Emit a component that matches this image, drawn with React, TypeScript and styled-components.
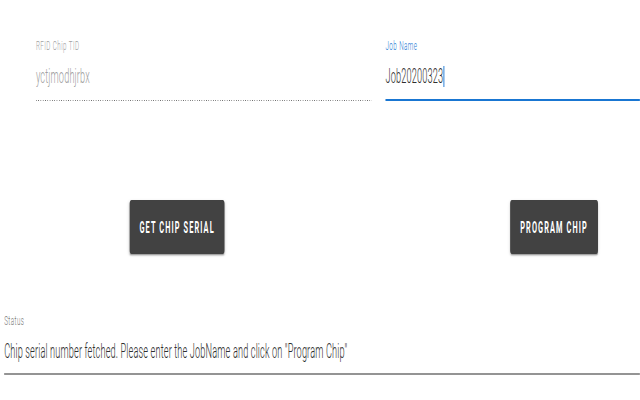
import React from "react";
import styled, { createGlobalStyle } from "styled-components";

const SX = 0.46;
const W = Math.round(640 / SX);

const Global = createGlobalStyle`
  html, body { margin: 0; padding: 0; background: #ffffff; overflow: hidden; }
  body { font-family: Roboto, "Liberation Sans", Arial, sans-serif; }
`;

const Page = styled.div`
  width: ${W}px;
  height: 400px;
  transform: scaleX(${SX});
  transform-origin: 0 0;
  display: flex;
  flex-direction: column;
  font-family: Roboto, "Liberation Sans", Arial, sans-serif;
`;

const FieldsRow = styled.div`
  display: flex;
  gap: 30px;
  padding: 39px 0 0 78px;
`;

const Field = styled.div<{ $w?: number }>`
  display: flex;
  flex-direction: column;
  ${(p) => (p.$w ? `width: ${p.$w}px;` : "flex: 1;")}
`;

const Label = styled.div<{ $color: string }>`
  font-size: 13.5px;
  line-height: 12px;
  letter-spacing: 1px;
  font-weight: 300;
  color: ${(p) => p.$color};
  height: 12px;
`;

const Value = styled.div<{ $color: string; $line: "dotted" | "focus" | "plain" }>`
  margin-top: 13px;
  font-size: 20px;
  line-height: 24px;
  height: 24px;
  font-weight: 300;
  letter-spacing: 0.3px;
  color: ${(p) => p.$color};
  display: flex;
  align-items: center;
  padding-bottom: ${(p) => (p.$line === "focus" ? 11 : 10)}px;
  ${(p) =>
    p.$line === "focus"
      ? "border-bottom: 2px solid #1976d2;"
      : p.$line === "dotted"
      ? `
    background-image: linear-gradient(to right, rgba(0,0,0,0.6) 50%, transparent 50%);
    background-size: 5px 1px;
    background-repeat: repeat-x;
    background-position: left bottom;
    padding-bottom: 13px;
  `
      : "border-bottom: 2px solid rgba(0,0,0,0.42);"}
`;

const Caret = styled.span`
  display: inline-block;
  width: 2px;
  height: 21px;
  margin-left: 1px;
  background: #1976d2;
`;

const ButtonsRow = styled.div`
  display: flex;
  padding: 0 0 0 282px;
  margin-top: 99px;
  gap: 621px;
`;

const Button = styled.button<{ $w: number }>`
  width: ${(p) => p.$w}px;
  height: 54px;
  border: none;
  border-radius: 4px;
  background: #424242;
  color: #ffffff;
  font-family: Roboto, "Liberation Sans", Arial, sans-serif;
  font-size: 16px;
  font-weight: 700;
  letter-spacing: 2.4px;
  text-transform: uppercase;
  box-shadow: 0px 3px 1px -2px rgba(0, 0, 0, 0.2), 0px 2px 2px 0px rgba(0, 0, 0, 0.14),
    0px 1px 5px 0px rgba(0, 0, 0, 0.12);
  cursor: pointer;
  padding: 0;
`;

const StatusBlock = styled.div`
  display: flex;
  flex-direction: column;
  margin-top: 60px;
  padding-left: 9px;
`;

export default function App() {
  return (
    <>
      <Global />
      <Page>
        <FieldsRow>
          <Field $w={730}>
            <Label $color="#a0a0a0">RFID Chip TID</Label>
            <Value $color="#a0a0a0" $line="dotted">yctjmodhjrbx</Value>
          </Field>
          <Field>
            <Label $color="#1976d2">Job Name</Label>
            <Value $color="#2e2e2e" $line="focus">
              Job20200323
              <Caret />
            </Value>
          </Field>
        </FieldsRow>
        <ButtonsRow>
          <Button $w={206}>Get Chip Serial</Button>
          <Button $w={191}>Program Chip</Button>
        </ButtonsRow>
        <StatusBlock>
          <Label $color="#757575">Status</Label>
          <Value $color="#2e2e2e" $line="plain">
            Chip serial number fetched. Please enter the JobName and click on "Program Chip"
          </Value>
        </StatusBlock>
      </Page>
    </>
  );
}
